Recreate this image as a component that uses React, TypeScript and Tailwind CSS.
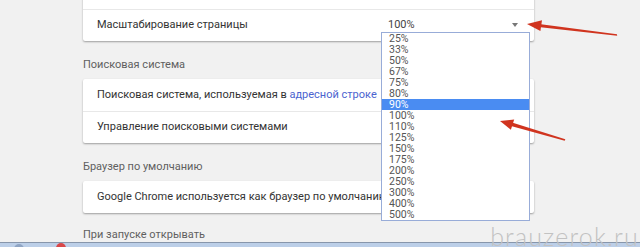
import React from "react";

const zoomLevels = [
  "25%", "33%", "50%", "67%", "75%", "80%", "90%", "100%", "110%",
  "125%", "150%", "175%", "200%", "250%", "300%", "400%", "500%",
];

function Card({ children }: { children: React.ReactNode }) {
  return (
    <div className="bg-white rounded-[2px] shadow-[0_1px_2px_rgba(0,0,0,0.35)]">
      {children}
    </div>
  );
}

function Row({ children, first = false }: { children?: React.ReactNode; first?: boolean }) {
  return (
    <div
      className={`h-[32px] flex items-center pl-[14px] pr-[12px] text-[11px] text-[#333] ${
        first ? "" : "border-t border-[#e8e8e8]"
      }`}
    >
      {children}
    </div>
  );
}

function SectionTitle({ children }: { children: React.ReactNode }) {
  return (
    <div className="h-[38px] pt-[17px] text-[11px] leading-[14px] text-[#5f5f5f]">
      {children}
    </div>
  );
}

function ZoomSelect() {
  return (
    <div className="relative ml-auto w-[134px] h-[15px] flex items-center justify-between border-b border-[#6f95de] mt-[-1px]">
      <span className="text-[11px] text-[#444] leading-[14px]">100%</span>
      <span className="mr-[4px] w-0 h-0 border-l-[3.5px] border-r-[3.5px] border-t-[4px] border-l-transparent border-r-transparent border-t-[#777]" />
      <ul className="absolute left-[-7px] top-[14px] w-[149px] bg-white border border-[#98acd8] z-10">
        {zoomLevels.map((z) => (
          <li
            key={z}
            className={`h-[11px] leading-[11px] pl-[7px] text-[10.5px] ${
              z === "90%" ? "bg-[#4a8cf2] text-white" : "text-[#555]"
            }`}
          >
            {z}
          </li>
        ))}
      </ul>
    </div>
  );
}

function Arrows() {
  return (
    <svg className="absolute inset-0 pointer-events-none z-20" width="640" height="247">
      {/* arrow to the select */}
      <polygon points="617,34.2 541,24.2 540.6,27.2 617.2,35.8" fill="#d0341f" />
      <polygon points="527,24 542,20.3 540.4,31" fill="#d0341f" />
      {/* arrow to the list */}
      <polygon points="565.3,139.2 512,122.6 511,126 564.7,140.8" fill="#d0341f" />
      <polygon points="500,121 514.2,119.6 510.9,129.8" fill="#d0341f" />
    </svg>
  );
}

export default function App() {
  return (
    <div className="relative w-[640px] h-[247px] overflow-hidden bg-[#f1f1f1] font-['Roboto',sans-serif]">
      <div className="ml-[83px] w-[451px] mt-[-23px]">
        <Card>
          <Row first />
          <Row>
            <span>Масштабирование страницы</span>
            <ZoomSelect />
          </Row>
        </Card>

        <SectionTitle>Поисковая система</SectionTitle>
        <Card>
          <Row first>
            <span>
              Поисковая система, используемая в{" "}
              <span className="text-[#4b63cf]">адресной строке</span>
            </span>
          </Row>
          <Row>
            <span>Управление поисковыми системами</span>
          </Row>
        </Card>

        <SectionTitle>Браузер по умолчанию</SectionTitle>
        <Card>
          <Row first>
            <span>Google Chrome используется как браузер по умолчанию</span>
          </Row>
        </Card>

        <div className="h-[30px] pt-[15px] text-[11px] leading-[14px] text-[#5f5f5f]">
          При запуске открывать
        </div>
      </div>

      <div className="absolute left-0 right-0 bottom-0 h-[5px] border-t border-[#8796ab] bg-[#bccfe8] flex items-start">
        <span className="ml-[14px] mt-[1px] w-[10px] h-[10px] rounded-full bg-[#8fa5c4]" />
        <span className="ml-[32px] mt-[0px] w-[10px] h-[10px] rounded-full bg-[#d8484a]" />
      </div>

      <div className="absolute right-[1px] bottom-[-2px] text-[25px] leading-[25px] font-light text-[#c2c2c2] font-['Lato',sans-serif] tracking-[1.2px]">
        brauzerok.ru
      </div>

      <Arrows />
    </div>
  );
}
